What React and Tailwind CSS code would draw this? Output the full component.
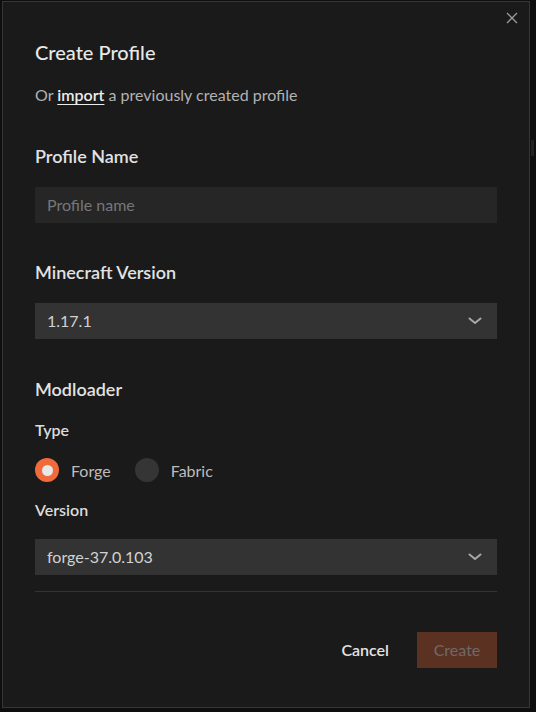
import React, { useState } from "react";

const Chevron = () => (
  <svg width="14" height="8" viewBox="0 0 14 8" fill="none" className="shrink-0">
    <path d="M1.5 1.5 L7 6 L12.5 1.5" stroke="#a8a8a8" strokeWidth="2" strokeLinecap="round" strokeLinejoin="round" />
  </svg>
);

const SelectBox = ({ value }) => (
  <div className="flex h-[36px] w-full items-center justify-between bg-[#333333] pl-3 pr-[15px] text-[16px] text-[#d2d2d2]">
    <span>{value}</span>
    <Chevron />
  </div>
);

const Radio = ({ label, checked, onClick }) => (
  <button onClick={onClick} className="flex items-center gap-3 mr-6">
    <span
      className={
        checked
          ? "flex h-6 w-6 items-center justify-center rounded-full bg-[#f06a3b]"
          : "flex h-6 w-6 items-center justify-center rounded-full bg-[#353535]"
      }
    >
      {checked && <span className="h-[11px] w-[11px] rounded-full bg-[#e8e8e8]" />}
    </span>
    <span className="text-[16px] leading-[1.2] text-[#bcbcbc]">{label}</span>
  </button>
);

const App = () => {
  const [loader, setLoader] = useState("forge");
  const [name, setName] = useState("");

  return (
    <div className="relative h-[712px] w-[536px] overflow-hidden bg-[#0e0e0e] font-[Lato,sans-serif]">
      {/* sliver of the page behind the overlay */}
      <div className="absolute left-[531px] top-[140px] h-4 w-[3px] bg-[#232323]" />

      <div className="relative ml-[2px] mt-[1px] flex h-[707px] w-[528px] flex-col border border-[#363636] bg-[#1a1a1a] px-8 pt-[38px]">
        <button className="absolute right-[10px] top-[9px] p-[1px]">
          <svg width="12" height="12" viewBox="0 0 12 12" fill="none">
            <path d="M1 1 L11 11 M11 1 L1 11" stroke="#9a9a9a" strokeWidth="1.3" />
          </svg>
        </button>

        <h1 className="text-[20px] font-medium leading-[1.2] text-[#e8e8e8]">Create Profile</h1>
        <p className="mt-[21px] text-[16px] leading-[1.2] text-[#b2b2b2]">
          Or{" "}
          <span className="font-semibold text-[#ececec] underline underline-offset-[3px]">import</span>{" "}
          a previously created profile
        </p>

        {/* Profile name */}
        <h2 className="mt-[42px] text-[18px] font-semibold leading-[1.2] text-[#e2e2e2]">Profile Name</h2>
        <input
          value={name}
          onChange={e => setName(e.target.value)}
          placeholder="Profile name"
          className="mt-[19px] h-[36px] w-full bg-[#262626] px-3 text-[16px] text-[#d2d2d2] outline-none placeholder:text-[#777777]"
        />

        {/* Minecraft version */}
        <h2 className="mt-[39px] text-[18px] font-semibold leading-[1.2] text-[#e2e2e2]">Minecraft Version</h2>
        <div className="mt-[20px]">
          <SelectBox value="1.17.1" />
        </div>

        {/* Modloader */}
        <h2 className="mt-[40px] text-[18px] font-semibold leading-[1.2] text-[#e2e2e2]">Modloader</h2>
        <h3 className="mt-[19px] text-[16px] font-semibold leading-[1.2] text-[#dcdcdc]">Type</h3>
        <div className="mt-[19px] flex items-center">
          <Radio label="Forge" checked={loader === "forge"} onClick={() => setLoader("forge")} />
          <Radio label="Fabric" checked={loader === "fabric"} onClick={() => setLoader("fabric")} />
        </div>
        <h3 className="mt-[18px] text-[16px] font-semibold leading-[1.2] text-[#dcdcdc]">Version</h3>
        <div className="mt-[20px]">
          <SelectBox value="forge-37.0.103" />
        </div>

        <div className="mt-[16px] h-px w-full bg-[#333333]" />

        <div className="mt-[40px] flex items-center justify-end gap-[28px]">
          <button className="text-[16px] font-semibold text-[#e4e4e4]">Cancel</button>
          <button disabled className="h-[36px] w-[80px] bg-[#5b3121] text-[16px] text-[#6e6a68]">
            Create
          </button>
        </div>
      </div>
    </div>
  );
};

export default App;
